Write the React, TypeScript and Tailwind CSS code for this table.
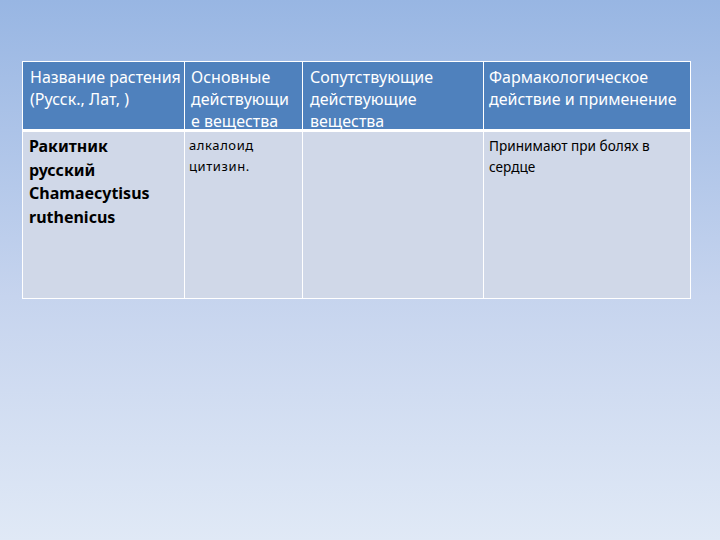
export default function App() {
    const font = { fontFamily: '"Noto Sans", "Open Sans", sans-serif' };
    return (
        <div
            className="w-[720px] h-[540px] bg-gradient-to-b from-[#98b6e3] via-[#c6d4ee] via-55% to-[#e0e9f6] pt-[61px] pl-[22px]"
            style={font}
        >
            <div className="w-[669px] border border-white">
                {/* header row */}
                <div className="grid grid-cols-[162px_118px_181px_206px] h-[70px] bg-[#4f81bd] text-white text-[16px] leading-[22px] border-b-[3px] border-white whitespace-nowrap">
                    <div className="pl-[7px] pt-[4px] border-r border-white">
                        Название растения
                        <br />
                        (Русск., Лат, )
                    </div>
                    <div className="pl-[6px] pt-[4px] border-r border-white">
                        Основные
                        <br />
                        действующи
                        <br />е вещества
                    </div>
                    <div className="pl-[7px] pt-[4px] border-r border-white">
                        Сопутствующие
                        <br />
                        действующие
                        <br />
                        вещества
                    </div>
                    <div className="pl-[5px] pt-[4px]">
                        Фармакологическое
                        <br />
                        действие и применение
                    </div>
                </div>
                {/* body row */}
                <div className="grid grid-cols-[162px_118px_181px_206px] h-[166px] bg-[#d0d8e8] text-black whitespace-nowrap">
                    <div className="pl-[6px] pt-[3px] border-r border-white text-[16px] font-bold leading-[23.5px]">
                        Ракитник
                        <br />
                        русский
                        <br />
                        Chamaecytisus
                        <br />
                        ruthenicus
                    </div>
                    <div className="pl-[4px] pt-[3px] border-r border-white text-[13px] leading-[21px] tracking-[0.6px]">
                        алкалоид
                        <br />
                        цитизин.
                    </div>
                    <div className="border-r border-white" />
                    <div className="pl-[5px] pt-[3px] text-[13.6px] leading-[21px]">
                        Принимают при болях в
                        <br />
                        сердце
                    </div>
                </div>
            </div>
        </div>
    );
}
